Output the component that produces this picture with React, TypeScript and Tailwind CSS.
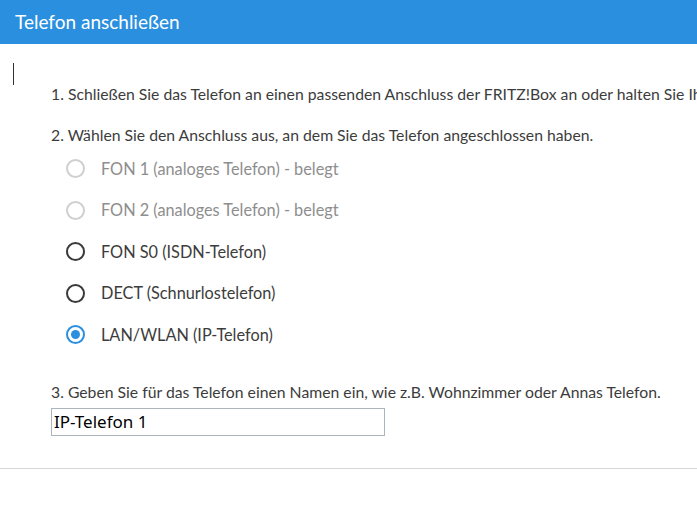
const ports = [
  { label: "FON 1 (analoges Telefon) - belegt", disabled: true },
  { label: "FON 2 (analoges Telefon) - belegt", disabled: true },
  { label: "FON S0 (ISDN-Telefon)" },
  { label: "DECT (Schnurlostelefon)" },
  { label: "LAN/WLAN (IP-Telefon)", checked: true },
];

const Radio = ({ checked, disabled }: { checked?: boolean; disabled?: boolean }) => {
  if (checked) {
    return (
      <span className="flex size-[19px] items-center justify-center rounded-full border-2 border-[#2a8fde]">
        <span className="size-[9px] rounded-full bg-[#2a8fde]" />
      </span>
    );
  }
  return (
    <span
      className={
        disabled
          ? "size-[19px] rounded-full border-2 border-[#cfcfcf]"
          : "size-[19px] rounded-full border-2 border-[#3a3a3a]"
      }
    />
  );
};

export default function App() {
  return (
    <div className="h-[522px] w-[697px] overflow-hidden bg-white font-['Lato',sans-serif] text-[15.75px] text-[#3c3c3c]">
      <header className="flex h-[44px] items-center bg-[#2a8fde] px-[15px] text-[19px] text-white">
        Telefon anschließen
      </header>

      <div className="relative pt-[19px]">
        {/* blinking text caret */}
        <span className="absolute left-[13px] top-[19px] h-[22px] w-px bg-[#333]" />

        <ol className="whitespace-nowrap pl-[51px]">
          <li className="pt-[21px] leading-[20px]">
            1. Schließen Sie das Telefon an einen passenden Anschluss der FRITZ!Box an oder halten Sie Ihr
          </li>
          <li className="pt-[21px] leading-[20px]">
            2. Wählen Sie den Anschluss aus, an dem Sie das Telefon angeschlossen haben.
            <div className="mt-[3px] flex flex-col pl-[15px]">
              {ports.map((p) => (
                <label
                  key={p.label}
                  className={
                    "flex h-[41.5px] items-center gap-[16px] " +
                    (p.disabled ? "text-[#8e8e8e]" : "text-[#3c3c3c]")
                  }
                >
                  <Radio checked={p.checked} disabled={p.disabled} />
                  <span className="text-[16.3px]">{p.label}</span>
                </label>
              ))}
            </div>
          </li>
          <li className="pt-[26px] leading-[20px]">
            3. Geben Sie für das Telefon einen Namen ein, wie z.B. Wohnzimmer oder Annas Telefon.
            <div className="mt-[6px]">
              <input
                defaultValue="IP-Telefon 1"
                className="h-[28px] w-[334px] border border-[#aab5bd] px-[2px] font-['Noto_Sans',sans-serif] text-[17px] text-black outline-none"
              />
            </div>
          </li>
        </ol>

        <hr className="mt-[32px] border-t border-[#d8d8d8]" />
      </div>
    </div>
  );
}
